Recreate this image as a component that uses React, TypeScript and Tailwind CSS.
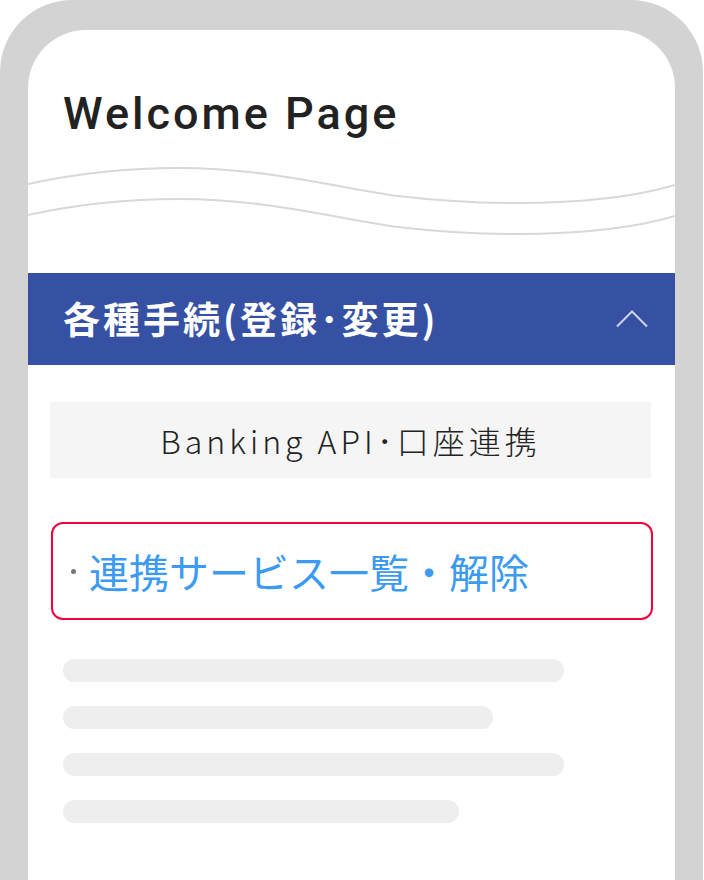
const bars = ["w-[501px]", "w-[430px]", "w-[501px]", "w-[396px]"];

export default function App() {
  return (
    <div className="w-[704px] h-[880px] bg-white overflow-hidden">
      <div className="w-[703px] h-[880px] bg-[#d3d3d3] rounded-t-[72px] px-[28px] pt-[30px] flex">
        <div className="flex-1 bg-white rounded-t-[58px] flex flex-col">
          <h1 className="mt-[62px] ml-[35px] text-[45px] leading-[44px] font-medium tracking-[3px] text-[#222222] font-['Roboto',Arial,sans-serif]">
            Welcome Page
          </h1>

          <svg className="mt-[24px] block" width="647" height="80" viewBox="0 0 647 80" fill="none">
            <path
              d="M0 24 C50 13 100 8 152 8 C240 8 320 30 370 36 C420 42 460 43 489 43 C560 43 610 36 647 25"
              stroke="#d8d8d8"
              strokeWidth="2"
            />
            <path
              d="M0 55 C50 44 100 39 152 39 C240 39 320 61 370 67 C420 73 460 74 489 74 C560 74 610 67 647 56"
              stroke="#d8d8d8"
              strokeWidth="2"
            />
          </svg>

          <div className="mt-[33px] h-[92px] bg-[#3651a3] flex items-center justify-between pl-[35px] pr-[27px]">
            <span className="text-white text-[37px] font-bold tracking-[3px] font-['Noto_Sans_CJK_JP',sans-serif]">
              各種手続(登録･変更)
            </span>
            <svg width="32" height="18" viewBox="0 0 32 18" fill="none">
              <path d="M1 16.5 L16 1.5 L31 16.5" stroke="#d0d4e6" strokeWidth="2" />
            </svg>
          </div>

          <div className="mt-[37px] ml-[22px] mr-[24px] h-[76px] bg-[#f5f5f5] flex items-center justify-center">
            <span className="text-[32px] font-light tracking-[4px] text-[#222222] font-['Noto_Sans_CJK_JP',sans-serif]">
              Banking API･口座連携
            </span>
          </div>

          <div className="mt-[44px] ml-[23px] mr-[22px] h-[98px] border-2 border-[#f0003c] rounded-[12px] flex items-center pl-[18px]">
            <span className="w-[5px] h-[5px] rounded-full bg-[#777777] mr-[13px]" />
            <span className="text-[40px] leading-none text-[#3c9bf0] font-['Noto_Sans_CJK_JP',sans-serif]">
              連携サービス一覧・解除
            </span>
          </div>

          <div className="mt-[39px] ml-[35px] flex flex-col gap-[24px]">
            {bars.map((w, i) => (
              <div key={i} className={`h-[23px] rounded-full bg-[#eeeeee] ${w}`} />
            ))}
          </div>
        </div>
      </div>
    </div>
  );
}
